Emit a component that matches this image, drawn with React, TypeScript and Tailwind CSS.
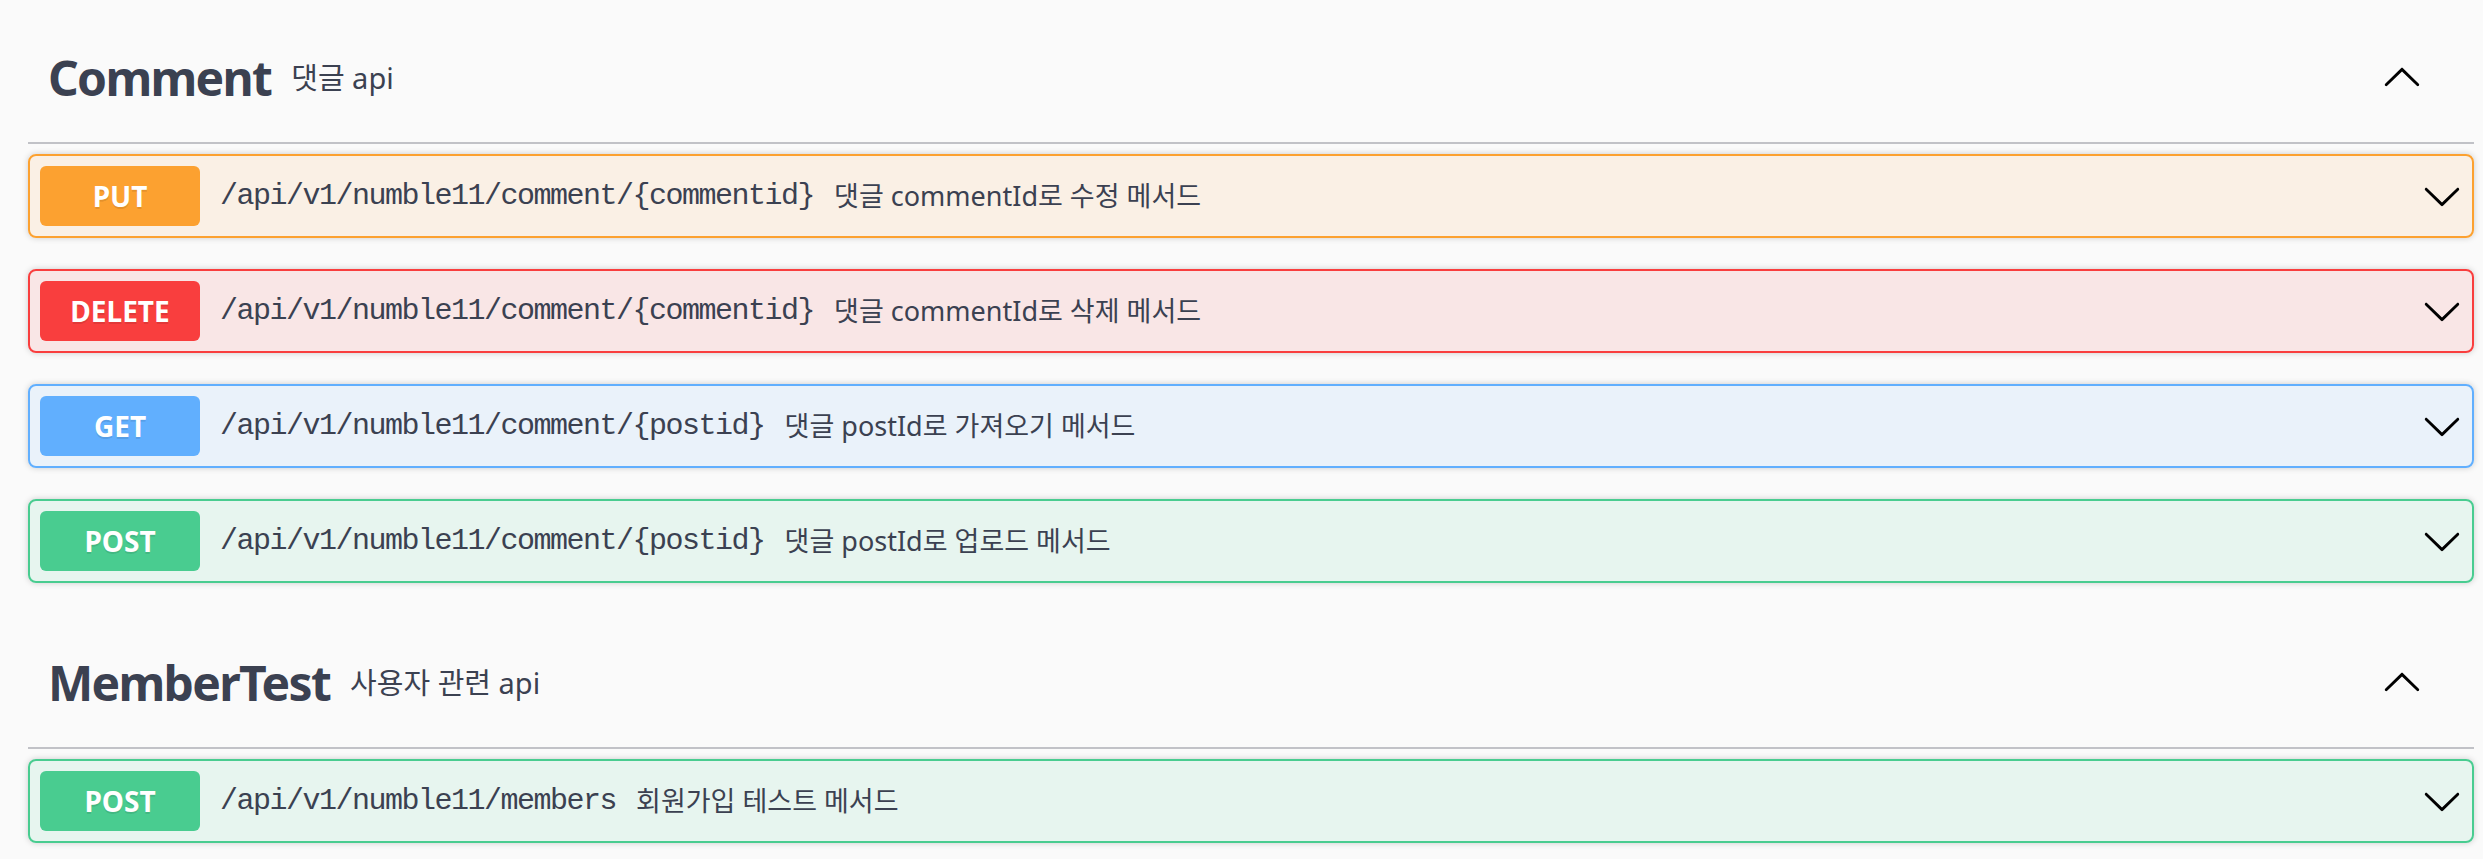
import React from 'react';

type Method = 'PUT' | 'DELETE' | 'GET' | 'POST';

interface Operation {
  method: Method;
  path: string;
  summary: string;
}

interface Tag {
  name: string;
  description: string;
  operations: Operation[];
}

const methodStyles: Record<Method, { row: string; badge: string }> = {
  PUT: { row: 'border-[#fca130] bg-[#fca130]/10', badge: 'bg-[#fca130]' },
  DELETE: { row: 'border-[#f93e3e] bg-[#f93e3e]/10', badge: 'bg-[#f93e3e]' },
  GET: { row: 'border-[#61affe] bg-[#61affe]/10', badge: 'bg-[#61affe]' },
  POST: { row: 'border-[#49cc90] bg-[#49cc90]/10', badge: 'bg-[#49cc90]' },
};

const tags: Tag[] = [
  {
    name: 'Comment',
    description: '댓글 api',
    operations: [
      { method: 'PUT', path: '/api/v1/numble11/comment/{commentid}', summary: '댓글 commentId로 수정 메서드' },
      { method: 'DELETE', path: '/api/v1/numble11/comment/{commentid}', summary: '댓글 commentId로 삭제 메서드' },
      { method: 'GET', path: '/api/v1/numble11/comment/{postid}', summary: '댓글 postId로 가져오기 메서드' },
      { method: 'POST', path: '/api/v1/numble11/comment/{postid}', summary: '댓글 postId로 업로드 메서드' },
    ],
  },
  {
    name: 'MemberTest',
    description: '사용자 관련 api',
    operations: [
      { method: 'POST', path: '/api/v1/numble11/members', summary: '회원가입 테스트 메서드' },
    ],
  },
];

const sans = { fontFamily: '"Noto Sans", "Noto Sans CJK KR", sans-serif' };
const mono = { fontFamily: '"Liberation Mono", "Noto Sans CJK KR", monospace' };

// swagger-ui arrow, drawn pointing down
const Arrow: React.FC<{ up?: boolean }> = ({ up }) => (
  <svg viewBox="0 0 20 20" className={`w-10 h-10 shrink-0 ${up ? 'rotate-180' : ''}`} fill="#000">
    <path d="M17.418 6.109c.272-.268.709-.268.979 0s.271.701 0 .969l-7.908 7.83c-.27.268-.707.268-.979 0l-7.908-7.830c-.27-.268-.27-.701 0-.969.271-.268.709-.268.979 0L10 13.25l7.418-7.141z" />
  </svg>
);

const OperationRow: React.FC<{ op: Operation }> = ({ op }) => {
  const s = methodStyles[op.method];
  return (
    <div className={`flex items-center h-[84px] border-2 rounded-[8px] p-[10px] shadow-[0_0_6px_rgba(0,0,0,0.19)] ${s.row}`}>
      <div
        className={`w-[160px] h-[60px] shrink-0 rounded-[6px] flex items-center justify-center text-white font-bold text-[28px] [text-shadow:0_2px_0_rgba(0,0,0,0.1)] ${s.badge}`}
        style={sans}
      >
        {op.method}
      </div>
      <span className="px-[20px] text-[30px] tracking-[-1.5px] text-[#3b4151]" style={mono}>
        {op.path}
      </span>
      <span className="flex-1 text-[27px] text-[#3b4151]" style={sans}>
        {op.summary}
      </span>
      <Arrow />
    </div>
  );
};

const TagSection: React.FC<{ tag: Tag }> = ({ tag }) => (
  <section>
    <div className="flex items-center h-[144px] pt-[14px] pl-[20px] pr-[52px] border-b-2 border-[#c1c2c7]">
      <h3 className="text-[48px] font-bold tracking-[-1.7px] text-[#3b4151]" style={sans}>
        {tag.name}
      </h3>
      <span className="flex-1 px-[20px] text-[29px] text-[#3b4151]" style={sans}>
        {tag.description}
      </span>
      <Arrow up />
    </div>
    <div className="flex flex-col gap-[31px] mt-[10px]">
      {tag.operations.map((op, i) => (
        <OperationRow key={i} op={op} />
      ))}
    </div>
  </section>
);

export default function App() {
  return (
    <div className="min-h-screen bg-[#fafafa]">
      <div className="ml-[28px] w-[2446px] flex flex-col gap-[22px]">
        {tags.map((t) => (
          <TagSection key={t.name} tag={t} />
        ))}
      </div>
    </div>
  );
}
